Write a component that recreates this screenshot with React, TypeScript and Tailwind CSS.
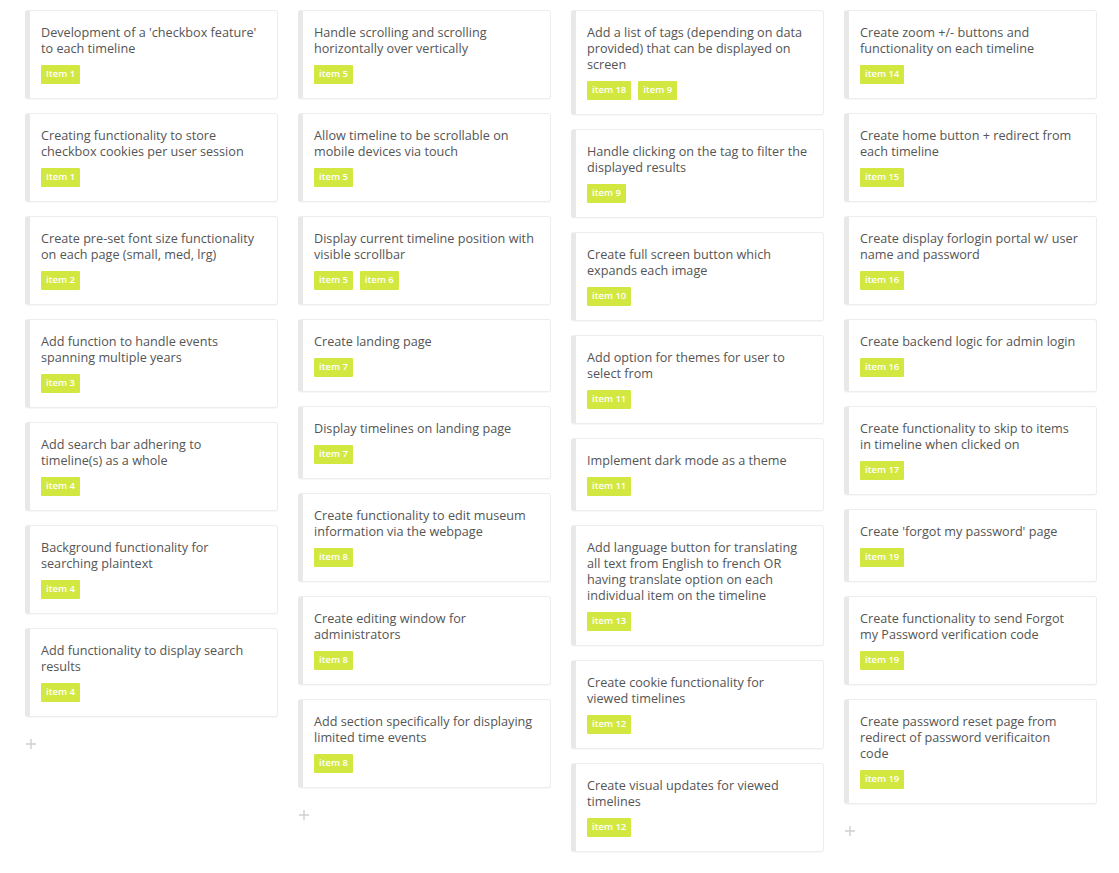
import React from 'react';

interface Task {
  title: string;
  tags: string[];
}

const columns: Task[][] = [
  [
    { title: "Development of a 'checkbox feature' to each timeline", tags: ['Item 1'] },
    { title: 'Creating functionality to store checkbox cookies per user session', tags: ['Item 1'] },
    { title: 'Create pre-set font size functionality on each page (small, med, lrg)', tags: ['item 2'] },
    { title: 'Add function to handle events spanning multiple years', tags: ['item 3'] },
    { title: 'Add search bar adhering to timeline(s) as a whole', tags: ['item 4'] },
    { title: 'Background functionality for searching plaintext', tags: ['item 4'] },
    { title: 'Add functionality to display search results', tags: ['item 4'] },
  ],
  [
    { title: 'Handle scrolling and scrolling horizontally over vertically', tags: ['item 5'] },
    { title: 'Allow timeline to be scrollable on mobile devices via touch', tags: ['item 5'] },
    { title: 'Display current timeline position with visible scrollbar', tags: ['item 5', 'item 6'] },
    { title: 'Create landing page', tags: ['item 7'] },
    { title: 'Display timelines on landing page', tags: ['item 7'] },
    { title: 'Create functionality to edit museum information via the webpage', tags: ['item 8'] },
    { title: 'Create editing window for administrators', tags: ['item 8'] },
    { title: 'Add section specifically for displaying limited time events', tags: ['item 8'] },
  ],
  [
    { title: 'Add a list of tags (depending on data provided) that can be displayed on screen', tags: ['item 18', 'item 9'] },
    { title: 'Handle clicking on the tag to filter the displayed results', tags: ['item 9'] },
    { title: 'Create full screen button which expands each image', tags: ['item 10'] },
    { title: 'Add option for themes for user to select from', tags: ['item 11'] },
    { title: 'Implement dark mode as a theme', tags: ['item 11'] },
    { title: 'Add language button for translating all text from English to french OR having translate option on each individual item on the timeline', tags: ['item 13'] },
    { title: 'Create cookie functionality for viewed timelines', tags: ['item 12'] },
    { title: 'Create visual updates for viewed timelines', tags: ['item 12'] },
  ],
  [
    { title: 'Create zoom +/- buttons and functionality on each timeline', tags: ['item 14'] },
    { title: 'Create home button + redirect from each timeline', tags: ['item 15'] },
    { title: 'Create display forlogin portal w/ user name and password', tags: ['item 16'] },
    { title: 'Create backend logic for admin login', tags: ['item 16'] },
    { title: 'Create functionality to skip to items in timeline when clicked on', tags: ['item 17'] },
    { title: "Create 'forgot my password' page", tags: ['item 19'] },
    { title: 'Create functionality to send Forgot my Password verification code', tags: ['item 19'] },
    { title: 'Create password reset page from redirect of password verificaiton code', tags: ['item 19'] },
  ],
];

function TaskCard({ task }: { task: Task }) {
  return (
    <div className="bg-white border border-[#ededed] border-l-[5px] border-l-[#e8e8e8] rounded-[3px] pl-[11px] pt-[13px] pb-[14px] shadow-[0_1px_1px_rgba(0,0,0,0.03)]">
      <div className="w-[221px] text-[12.65px] leading-[16px] text-[#555555]">{task.title}</div>
      <div className="flex gap-[7px] mt-[9px]">
        {task.tags.map((tag) => (
          <span
            key={tag}
            className="h-[19px] px-[5px] flex items-center bg-[#d2e841] rounded-[1px] text-[9.5px] text-white font-semibold"
          >
            {tag}
          </span>
        ))}
      </div>
    </div>
  );
}

function AddButton() {
  return (
    <div className="mt-[8px] pl-[1px] h-[10px]">
      <svg width="10" height="10" viewBox="0 0 10 10">
        <path d="M5 0v10M0 5h10" stroke="#cfcfcf" strokeWidth="1.4" />
      </svg>
    </div>
  );
}

export default function App() {
  return (
    <div
      className="min-h-screen bg-white pl-[25px] pt-[10px] flex gap-[20px] items-start"
      style={{ fontFamily: '"Open Sans", "Noto Sans", sans-serif' }}
    >
      {columns.map((col, i) => (
        <div key={i} className="w-[253px] flex flex-col gap-[14px]">
          {col.map((task) => (
            <TaskCard key={task.title} task={task} />
          ))}
          <AddButton />
        </div>
      ))}
    </div>
  );
}
